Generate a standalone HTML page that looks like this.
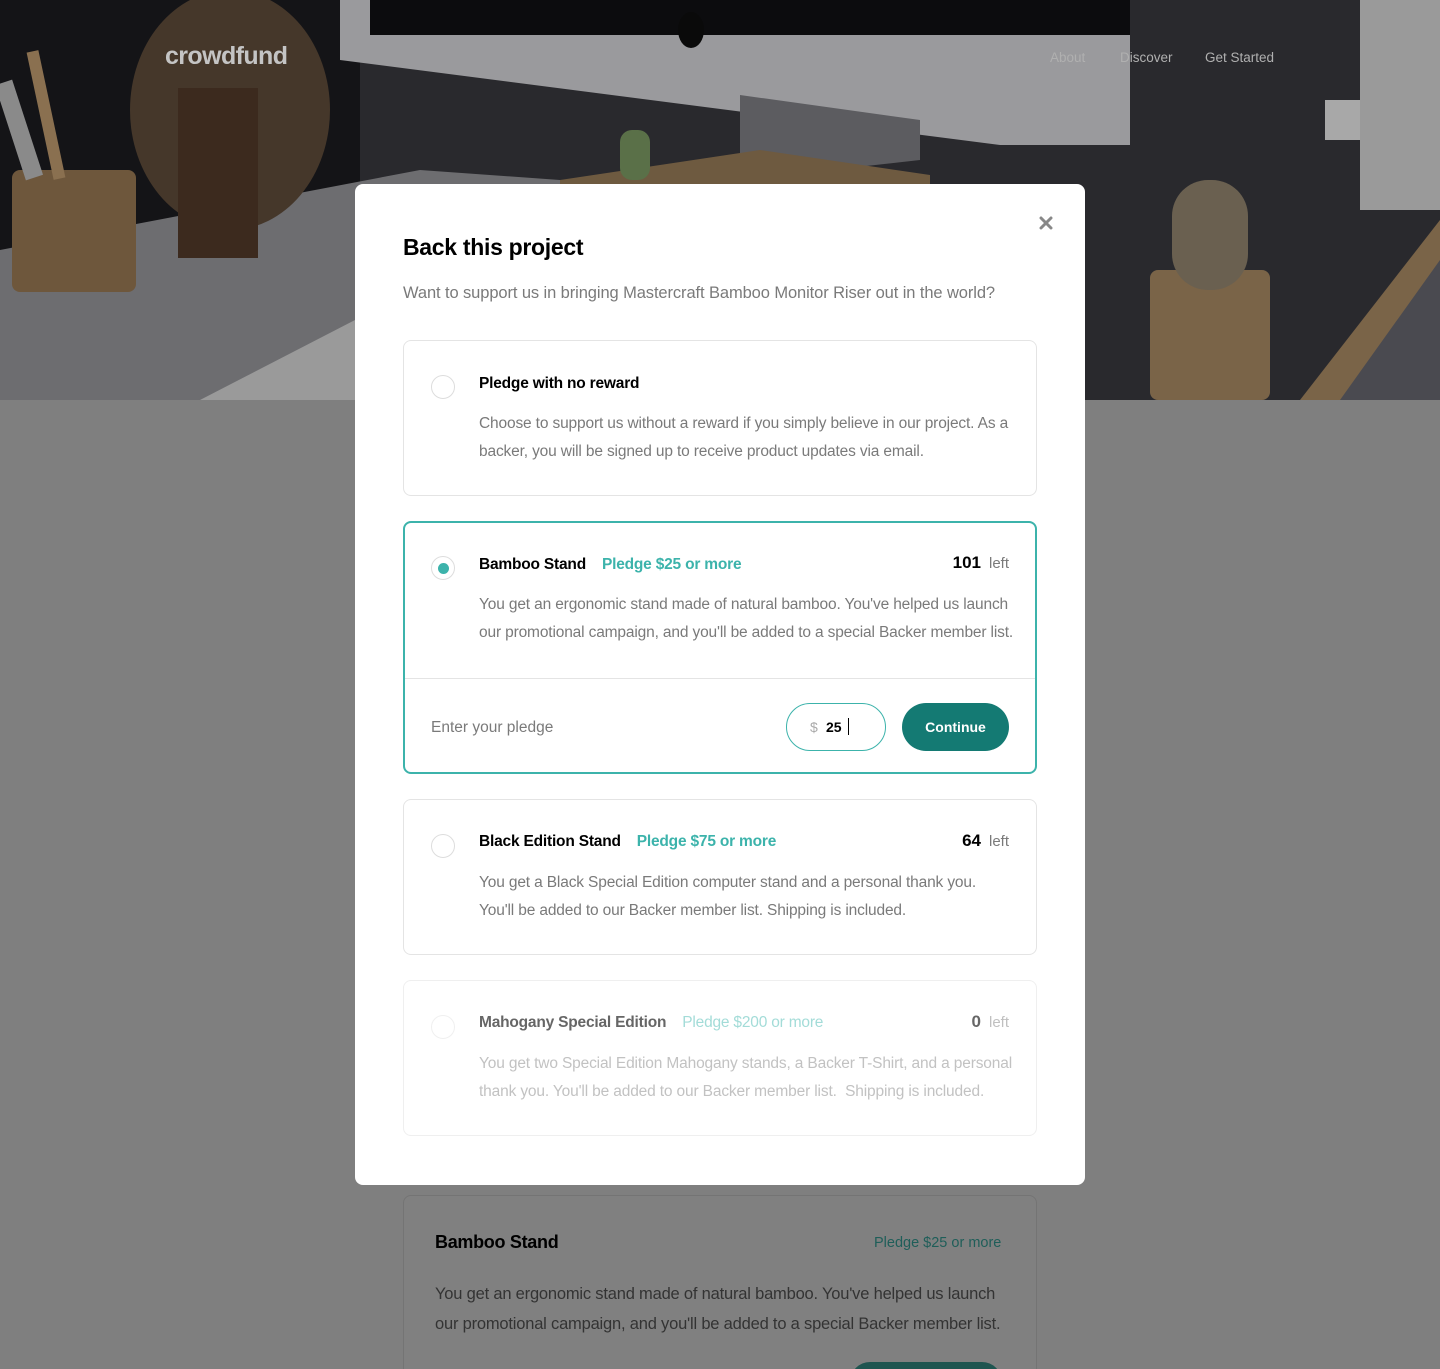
<!DOCTYPE html>
<html><head><meta charset="utf-8"><style>
*{margin:0;padding:0;box-sizing:border-box}
html,body{width:1440px;height:1369px;overflow:hidden}
body{background:#7f7f7f;font-family:"Liberation Sans",sans-serif;position:relative}
.a{position:absolute;white-space:nowrap}
.card{position:absolute;left:403px;width:634px;background:#fff;border:1px solid #e4e4e4;border-radius:8px}
.radio{position:absolute;left:27px;width:24px;height:24px;border:1px solid #ddd;border-radius:50%;background:#fff}
.t{position:absolute;left:75px;font-weight:bold;font-size:15.5px;color:#000;letter-spacing:-0.2px}
.p{font-weight:bold;color:#3cb3ab;margin-left:16px;font-size:15.5px}
.d{position:absolute;left:75px;font-size:15.5px;color:#7a7a7a;line-height:28px;letter-spacing:-0.15px}
.left{position:absolute;right:27px;font-size:15px;color:#7a7a7a}
.left b{color:#000;font-size:17px;margin-right:8px}
</style></head><body>
<svg class="a" style="left:0;top:0" width="1440" height="400" viewBox="0 0 1440 400">
<rect width="1440" height="400" fill="#29292d"/>
<rect x="0" y="0" width="360" height="250" fill="#141417"/>
<polygon points="0,250 420,170 560,180 560,400 0,400" fill="#6d6d70"/>
<ellipse cx="230" cy="110" rx="100" ry="120" fill="#45372a"/>
<rect x="178" y="88" width="80" height="170" fill="#3c2a1e"/>
<rect x="12" y="170" width="124" height="122" rx="8" fill="#6e573c"/>
<rect x="40" y="50" width="12" height="130" fill="#8a7050" transform="rotate(-12 46 115)"/>
<rect x="10" y="80" width="18" height="100" fill="#8a8a8a" transform="rotate(-18 19 130)"/>
<polygon points="340,0 1130,0 1130,145 1000,145 340,60" fill="#9a9a9d"/>
<rect x="370" y="0" width="760" height="35" fill="#0c0c0e"/>
<polygon points="740,95 920,120 920,160 740,180" fill="#5c5c60"/>
<polygon points="560,180 760,150 930,175 930,260 560,260" fill="#6e5a40"/>
<rect x="620" y="130" width="30" height="50" rx="12" fill="#5a7048"/>
<ellipse cx="691" cy="30" rx="13" ry="18" fill="#0a0a0a"/>
<rect x="1150" y="270" width="120" height="130" rx="8" fill="#7a6448"/>
<rect x="1172" y="180" width="76" height="110" rx="36" fill="#6a6050"/>
<rect x="1325" y="100" width="115" height="40" fill="#a8a8a8"/>
<rect x="1360" y="0" width="80" height="210" fill="#9a9a9a"/>
<polygon points="1440,220 1440,400 1300,400" fill="#7a6448"/>
<polygon points="1440,260 1440,400 1340,400" fill="#4a4a50"/>
<polygon points="200,400 355,320 355,400" fill="#9a9a9a"/>
</svg>
<div class="a" style="left:165px;top:42px;font-size:25px;font-weight:bold;color:#c4c4c4;letter-spacing:-0.6px">crowdfund</div>
<div class="a" style="left:1050px;top:50px;font-size:13.5px;color:#b0b0b0">About</div>
<div class="a" style="left:1120px;top:50px;font-size:13.5px;color:#b0b0b0">Discover</div>
<div class="a" style="left:1205px;top:50px;font-size:13.5px;color:#b0b0b0">Get Started</div>

<div class="a" style="left:403px;top:1195px;width:634px;height:200px;border:1px solid #747474;border-radius:8px;background:#808080"></div>
<div class="a" style="left:435px;top:1232px;font-size:18px;font-weight:bold;color:#000;letter-spacing:-0.3px">Bamboo Stand</div>
<div class="a" style="left:874px;top:1235px;font-size:14.5px;color:#1f5e59">Pledge $25 or more</div>
<div class="a" style="left:435px;top:1279px;font-size:16.5px;color:#333;line-height:30px;letter-spacing:-0.2px">You get an ergonomic stand made of natural bamboo. You've helped us launch<br>our promotional campaign, and you'll be added to a special Backer member list.</div>
<div class="a" style="left:850px;top:1362px;width:152px;height:40px;border-radius:20px;background:#1f5550"></div>

<div class="a" style="left:355px;top:184px;width:730px;height:1001px;background:#fff;border-radius:8px"></div>
<svg class="a" style="left:1039px;top:216px" width="14" height="14" viewBox="0 0 14 14"><path d="M2 2L12 12M12 2L2 12" stroke="#888" stroke-width="3" stroke-linecap="round"/></svg>
<div class="a" style="left:403px;top:234px;font-size:23px;font-weight:bold;color:#000;letter-spacing:-0.3px">Back this project</div>
<div class="a" style="left:403px;top:284px;font-size:16.5px;color:#7a7a7a;letter-spacing:-0.1px">Want to support us in bringing Mastercraft Bamboo Monitor Riser out in the world?</div>

<div class="card" style="top:340px;height:156px">
 <div class="radio" style="top:34px"></div>
 <div class="t" style="top:34px">Pledge with no reward</div>
 <div class="d" style="top:69px">Choose to support us without a reward if you simply believe in our project. As a<br>backer, you will be signed up to receive product updates via email.</div>
</div>

<div class="card" style="top:521px;height:253px;border:2px solid #3cb3ab">
 <div class="radio" style="top:33px;left:26px"><div style="position:absolute;left:6px;top:6px;width:11px;height:11px;border-radius:50%;background:#3cb3ab"></div></div>
 <div class="t" style="top:33px;left:74px">Bamboo Stand<span class="p">Pledge $25 or more</span></div>
 <div class="left" style="top:30px;right:26px"><b>101</b>left</div>
 <div class="d" style="top:68px;left:74px">You get an ergonomic stand made of natural bamboo. You've helped us launch<br>our promotional campaign, and you'll be added to a special Backer member list.</div>
 <div style="position:absolute;left:0;right:0;top:155px;border-top:1px solid #e4e4e4"></div>
 <div class="a" style="left:26px;top:196px;font-size:15.5px;color:#7a7a7a">Enter your pledge</div>
 <div class="a" style="left:381px;top:180px;width:100px;height:48px;border:1px solid #3cb3ab;border-radius:24px;font-size:14px"><span style="position:absolute;left:23px;top:15px;color:#aaa">$</span><span style="position:absolute;left:39px;top:15px;font-weight:bold;color:#000">25</span><span style="position:absolute;left:61px;top:14px;width:1px;height:17px;background:#000"></span></div>
 <div class="a" style="left:497px;top:180px;width:107px;height:48px;border-radius:24px;background:#147a73;color:#fff;font-weight:bold;font-size:14px;text-align:center;line-height:48px">Continue</div>
</div>

<div class="card" style="top:799px;height:156px">
 <div class="radio" style="top:34px"></div>
 <div class="t" style="top:33px">Black Edition Stand<span class="p">Pledge $75 or more</span></div>
 <div class="left" style="top:31px"><b>64</b>left</div>
 <div class="d" style="top:69px">You get a Black Special Edition computer stand and a personal thank you.<br>You'll be added to our Backer member list. Shipping is included.</div>
</div>

<div class="card" style="top:980px;height:156px;border-color:#efefef">
 <div class="radio" style="top:34px;border-color:#f0f0f0"></div>
 <div class="t" style="top:33px;color:#666">Mahogany Special Edition<span class="p" style="color:#a3dcd8;font-weight:normal">Pledge $200 or more</span></div>
 <div class="left" style="top:31px;color:#c0c0c0"><b style="color:#666">0</b>left</div>
 <div class="d" style="top:69px;color:#c2c2c2">You get two Special Edition Mahogany stands, a Backer T-Shirt, and a personal<br>thank you. You'll be added to our Backer member list.&nbsp; Shipping is included.</div>
</div>
</body></html>
